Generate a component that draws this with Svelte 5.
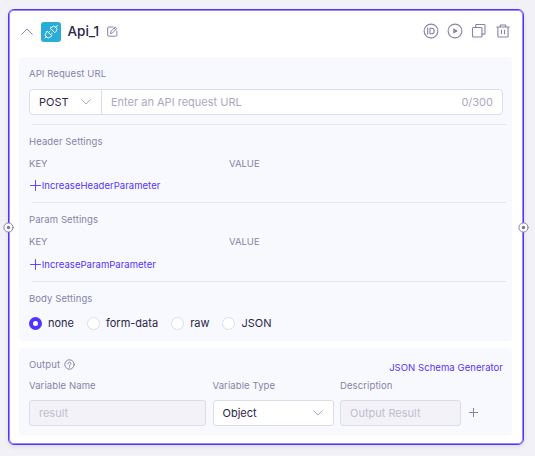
<script>
  let method = $state('POST');
  let body = $state('none');
  const sections = [
    { title: 'Header Settings', add: 'IncreaseHeaderParameter' },
    { title: 'Param Settings', add: 'IncreaseParamParameter' }
  ];
  const bodyTypes = ['none', 'form-data', 'raw', 'JSON'];
</script>

{#snippet chevron()}
  <svg class="chevron" width="10" height="6" viewBox="0 0 10 6"><path d="M.7.7 5 5 9.3.7" /></svg>
{/snippet}

{#snippet port(side)}
  <svg class="port {side}" width="11" height="11" viewBox="0 0 11 11"><circle cx="5.5" cy="5.5" r="4.6" /><circle class="dot" cx="5.5" cy="5.5" r="1.7" /></svg>
{/snippet}

<div class="canvas">
  <div class="card">
    <header>
      <svg class="collapse" width="12" height="7" viewBox="0 0 12 7"><path d="M.7 6.2 6 1l5.3 5.2" /></svg>
      <span class="logo">
        <svg width="20" height="20" viewBox="0 0 20 20">
          <path d="M4 16l1.6-1.6M14.4 5.4 16.4 3.4M6.3 9.4l4.4 4.4-1.1 1.1a3.1 3.1 0 0 1-4.4-4.4zM9.4 6.3l4.4 4.4 1.1-1.1a3.1 3.1 0 0 0-4.4-4.4zM7.5 10.4l1.4-1.4M9.8 12.6l1.4-1.4" />
        </svg>
      </span>
      <h1>Api_1</h1>
      <svg class="edit" width="11" height="11" viewBox="0 0 11 11"><path d="M6 1H1.7a1 1 0 0 0-1 1v7.2a1 1 0 0 0 1 1h7.2a1 1 0 0 0 1-1V5.3M3.7 7.3l.3-2L8.2 1l1.6 1.6-4.2 4.3zM7.2 2.1l1.5 1.5" /></svg>
      <div class="actions">
        <svg width="16" height="16" viewBox="0 0 16 16"><circle cx="8" cy="8" r="6.9" /><path d="M4.7 4.9v6.2M7 5.2v5.6h1.4c1.8 0 2.8-1.1 2.8-2.8S10.2 5.2 8.4 5.2z" /></svg>
        <svg width="16" height="16" viewBox="0 0 16 16"><circle cx="8" cy="8" r="6.9" /><path class="solid" d="M6.3 5.2v5.6L11 8z" /></svg>
        <svg width="16" height="16" viewBox="0 0 16 16"><rect x="1.5" y="4.5" width="9.5" height="9.5" rx="1" /><path d="M4.7 4.5V2.3a.8.8 0 0 1 .8-.8h7.7a.8.8 0 0 1 .8.8v8a.8.8 0 0 1-.8.8H11" /></svg>
        <svg width="16" height="16" viewBox="0 0 16 16"><path d="M1.7 4h12.6M2.9 4v9.2a.8.8 0 0 0 .8.8h8.6a.8.8 0 0 0 .8-.8V4M5.3 4V2h5.4v2M6.5 7.2v3.6M9.5 7.2v3.6" /></svg>
      </div>
    </header>

    <section class="request">
      <div class="label">API Request URL</div>
      <div class="url">
        <button class="method">{method}{@render chevron()}</button>
        <div class="address"><span>Enter an API request URL</span><span>0/300</span></div>
      </div>
      {#each sections as s}
        <div class="group">
          <div class="label">{s.title}</div>
          <div class="cols"><span>KEY</span><span>VALUE</span></div>
          <div class="add">
            <svg width="11" height="11" viewBox="0 0 11 11"><path d="M5.5.5v10M.5 5.5h10" /></svg>
            <span>{s.add}</span>
          </div>
        </div>
      {/each}
      <div class="group last">
        <div class="label">Body Settings</div>
        <div class="radios">
          {#each bodyTypes as t}
            <button class="radio" class:on={body === t} onclick={() => (body = t)}><i></i>{t}</button>
          {/each}
        </div>
      </div>
    </section>

    <section class="output">
      <div class="top">
        <span class="label out">Output</span>
        <svg width="11" height="11" viewBox="0 0 11 11"><circle cx="5.5" cy="5.5" r="4.7" /><path d="M4 4.6c0-2 3-2 3 0 0 1-1.5.9-1.5 2M5.5 7.7v.4" /></svg>
        <a href="#schema">JSON Schema Generator</a>
      </div>
      <div class="fields">
        <div class="name"><div class="label">Variable Name</div><div class="box off">result</div></div>
        <div class="type"><div class="label">Variable Type</div><div class="box">Object{@render chevron()}</div></div>
        <div class="desc"><div class="label">Description</div><div class="box off">Output Result</div></div>
        <svg class="plus" width="9" height="9" viewBox="0 0 9 9"><path d="M4.5.3v8.4M.3 4.5h8.4" /></svg>
      </div>
    </section>

    {@render port('left')}
    {@render port('right')}
  </div>
</div>

<style>
  :global(body) { background: #f2f1f7; }
  .canvas {
    box-sizing: border-box;
    width: 535px;
    height: 456px;
    padding: 9px 11px 11px 8px;
    font-family: Inter, "Liberation Sans", sans-serif;
    color: #2b2549;
    background: #f2f1f7;
  }
  .canvas * { box-sizing: border-box; }
  svg { fill: none; stroke: #8583a8; stroke-width: 1; flex: none; stroke-linecap: round; stroke-linejoin: round; }
  button { font: inherit; color: inherit; background: none; border: 0; padding: 0; }
  .card {
    position: relative;
    height: 436px;
    padding: 0 11px 0 10px;
    border: 1px solid #5533ff;
    border-radius: 6px;
    background: #fff;
    box-shadow: inset 0 0 0 1px #9b87ff, 0 2px 4px #28234018;
  }
  header { display: flex; align-items: center; height: 47px; padding: 0 1px 4px 2px; }
  .logo { width: 20px; height: 20px; margin-left: 8.4px; border-radius: 3px; background: #29acd8; }
  .logo svg { display: block; stroke: #fff; }
  h1 { margin: 0 0 1px 6.1px; width: 33px; font-size: 13.5px; line-height: 20px; font-weight: 500; white-space: nowrap; }
  .edit { margin: 0 0 1px 6.5px; }
  .actions { display: flex; gap: 8px; margin: -1px 0 0 auto; }
  .actions svg { stroke-width: 1.1; }
  .actions .solid { fill: #8583a8; stroke: none; }
  section { border-radius: 4px; background: #f8f9fe; padding: 0 10px; }
  .request { height: 284px; padding-top: 10px; }
  .label { height: 14px; line-height: 14px; font-size: 9.5px; letter-spacing: .1px; color: #8583a8; white-space: nowrap; }
  .url {
    display: flex;
    height: 26px;
    margin: 8px -1px 0 0;
    border: 1px solid #dddce8;
    border-radius: 4px;
    background: #fff;
    font-size: 11px;
    line-height: 24px;
  }
  .method { display: flex; align-items: center; justify-content: space-between; width: 72px; padding: 0 10px 0 9px; border-right: 1px solid #dddce8; }
  .chevron { stroke: #aaa8c2; }
  .address { display: flex; flex: 1; justify-content: space-between; padding: 0 9px; color: #aaa8c2; }
  .group { height: 78px; padding-top: 11px; margin-right: -4px; background: linear-gradient(#e6e5ed, #e6e5ed) 3px 0 / 100% 1px no-repeat; }
  .url + .group { margin-top: 9px; }
  .group + .group { height: 79px; }
  .cols { display: flex; height: 14px; margin-top: 8px; font-size: 9.5px; line-height: 14px; color: #8583a8; }
  .cols span { width: 200px; }
  .add { display: flex; align-items: center; height: 14px; margin-top: 8px; padding-left: 1px; font-size: 9.5px; letter-spacing: .03px; color: #5533ff; gap: .7px; }
  .url + .group .add { margin-top: 7px; }
  .add svg { stroke: #5533ff; stroke-width: .9; }
  .radios { display: flex; height: 14px; margin-top: 10px; gap: 13px; font-size: 11px; }
  .radio { display: flex; align-items: center; gap: 6px; line-height: 14px; }
  .radio i { width: 13px; height: 13px; border: 1px solid #dddce8; border-radius: 50%; background: #fff; }
  .radio.on i { border: 4px solid #5533ff; }
  .output { height: 87px; margin-top: 7px; padding-top: 9px; }
  .top { display: flex; align-items: center; height: 16px; gap: 4px; }
  .top svg { margin-bottom: 1px; }
  .top a { margin: 6px -1px 0 auto; font-size: 9.5px; line-height: 14px; letter-spacing: .06px; color: #5533ff; text-decoration: none; }
  .fields { display: flex; margin-top: 6px; }
  .name { width: 177px; }
  .type { width: 121px; margin-left: 6.5px; }
  .desc { width: 121px; margin-left: 6.5px; }
  .box {
    display: flex;
    align-items: center;
    justify-content: space-between;
    height: 26px;
    margin-top: 7px;
    padding: 0 10px 0 9px;
    border: 1px solid #dddce8;
    border-radius: 3px;
    background: #fff;
    font-size: 11px;
  }
  .off { background: #f3f2f8; color: #c0becf; }
  .plus { align-self: flex-end; margin: 0 0 9px 7.5px; }
  .port { position: absolute; top: 212px; fill: #fff; }
  .dot { fill: #77759b; stroke: none; }
  .left { left: -6.5px; }
  .right { right: -6px; }
</style>
